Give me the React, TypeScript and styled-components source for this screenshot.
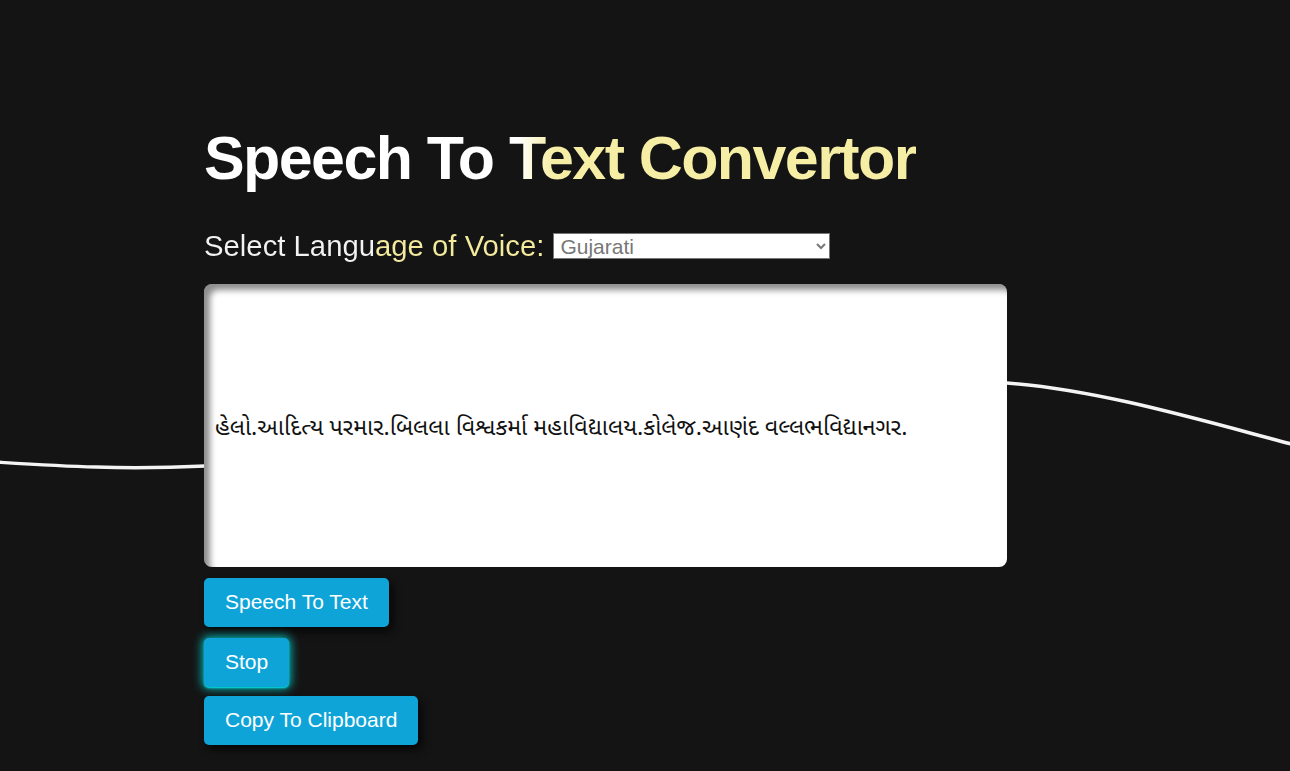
import styled, { createGlobalStyle } from "styled-components";

const GlobalStyle = createGlobalStyle`
  html, body {
    margin: 0;
    padding: 0;
    background: #141414;
    font-family: "Liberation Sans", Arial, sans-serif;
  }
`;

const Page = styled.div`
  position: relative;
  min-height: 771px;
  overflow: hidden;
`;

const Wave = styled.svg`
  position: absolute;
  left: 0;
  top: 0;
  width: 1290px;
  height: 771px;
  z-index: 0;
`;

const Content = styled.main`
  position: relative;
  z-index: 1;
  padding: 120px 0 0 204px;
  display: flex;
  flex-direction: column;
  align-items: flex-start;
`;

const Title = styled.h1`
  display: inline-block;
  margin: 0;
  font-size: 61px;
  font-weight: 700;
  letter-spacing: -1.6px;
  line-height: 77px;
  background: linear-gradient(90deg, #ffffff 44%, #f7eea6 49%);
  -webkit-background-clip: text;
  background-clip: text;
  color: transparent;
`;

const LangRow = styled.div`
  display: flex;
  align-items: center;
  gap: 9px;
  margin-top: 32px;
`;

const Label = styled.label`
  font-size: 29.3px;
  background: linear-gradient(90deg, #f2f2f2 50%, #f3ea9e 50%);
  -webkit-background-clip: text;
  background-clip: text;
  color: transparent;
`;

const Select = styled.select`
  width: 277px;
  height: 26px;
  font-family: "Liberation Sans", Arial, sans-serif;
  font-size: 21px;
  color: #777;
  background: #fff;
  border: 1px solid #767676;
  border-radius: 0;
  padding: 0 2px;
`;

const TextBox = styled.div`
  margin-top: 21px;
  width: 803px;
  height: 283px;
  box-sizing: border-box;
  background: #fff;
  border-radius: 8px;
  box-shadow: inset 6px 6px 6px rgba(0, 0, 0, 0.45);
  display: flex;
  align-items: center;
  padding: 7px 11px 0;
  font-family: "Noto Sans Gujarati", "Noto Sans", sans-serif;
  font-size: 23.3px;
  font-weight: 400;
  color: #111;
`;

const Button = styled.button<{ $glow?: boolean; $gap?: number }>`
  margin-top: ${(p) => p.$gap ?? 11}px;
  padding: 12px 21px 13px;
  font-family: "Liberation Sans", Arial, sans-serif;
  font-size: 21px;
  color: #fff;
  background: #0fa4d8;
  border: none;
  border-radius: 5px;
  box-shadow: ${(p) =>
    p.$glow
      ? "0 0 10px 2px rgba(0, 230, 230, 0.75), 0 1px 2px #00e5e5"
      : "4px 5px 8px rgba(0, 0, 0, 0.7)"};
  cursor: pointer;
`;

export default function App() {
  return (
    <Page>
      <GlobalStyle />
      <Wave viewBox="0 0 1290 771">
        <path
          d="M -5 462 C 60 466 120 470 205 466 C 500 452 800 372 1007 383 C 1100 390 1200 420 1295 445"
          fill="none"
          stroke="#f4f4f4"
          strokeWidth="3.5"
        />
      </Wave>
      <Content>
        <Title>Speech To Text Convertor</Title>
        <LangRow>
          <Label>Select Language of Voice:</Label>
          <Select defaultValue="gu">
            <option value="en">English</option>
            <option value="hi">Hindi</option>
            <option value="gu">Gujarati</option>
          </Select>
        </LangRow>
        <TextBox>
          હેલો.આદિત્ય પરમાર.બિલલા વિશ્વકર્મા મહાવિદ્યાલય.કોલેજ.આણંદ વલ્લભવિદ્યાનગર.
        </TextBox>
        <Button>Speech To Text</Button>
        <Button $glow>Stop</Button>
        <Button $gap={9}>Copy To Clipboard</Button>
      </Content>
    </Page>
  );
}
